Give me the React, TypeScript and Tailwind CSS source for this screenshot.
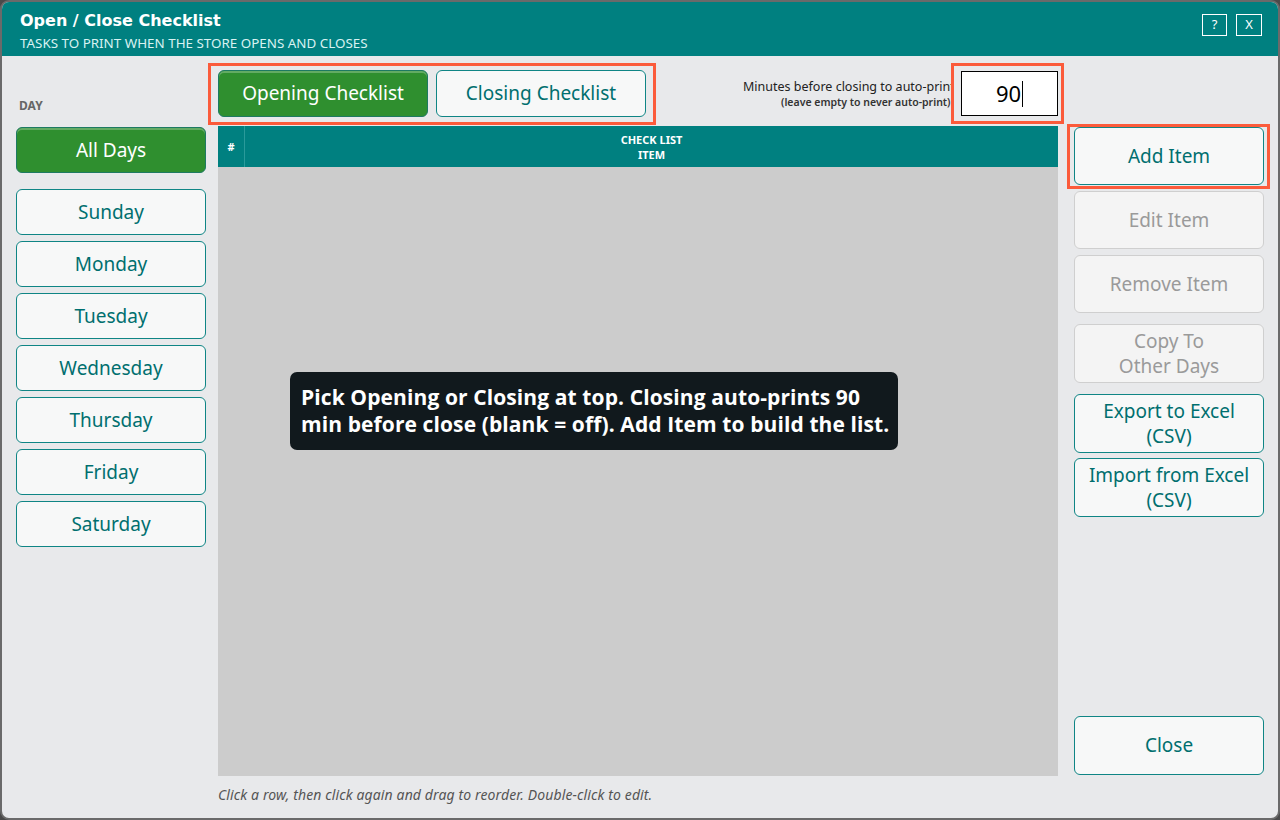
import React from "react";

const font = { fontFamily: '"Noto Sans", "Open Sans", sans-serif' };

function Btn({
  children,
  variant = "normal",
  className = "",
}: {
  children: React.ReactNode;
  variant?: "normal" | "active" | "disabled";
  className?: string;
}) {
  const styles =
    variant === "active"
      ? "bg-[#2f8f2f] border-[#1e7a62] text-white shadow-[inset_0_2px_0_rgba(255,255,255,0.25)]"
      : variant === "disabled"
      ? "bg-[#f4f4f4] border-[#cfcfcf] text-[#9a9a9a]"
      : "bg-[#f7f8f8] border-[#0f8585] text-[#006f6f]";
  return (
    <div
      className={`flex items-center justify-center text-center rounded-[6px] border-[1.5px] text-[19px] leading-[25px] ${styles} ${className}`}
    >
      {children}
    </div>
  );
}

export default function App() {
  const days = ["Sunday", "Monday", "Tuesday", "Wednesday", "Thursday", "Friday", "Saturday"];
  return (
    <div className="w-[1280px] h-[820px] bg-[#4a4a4a]" style={font}>
      <div className="w-[1280px] h-[820px] rounded-[9px] border-2 border-[#6a6a6a] overflow-hidden flex flex-col bg-[#e8e9eb]">
        {/* Header */}
        <div className="h-[54px] shrink-0 bg-[#008080] flex items-start justify-between pl-[18px] pr-[16px]">
          <div className="pt-[8px]">
            <div
              className="text-white text-[16px] font-bold leading-[21px]"
              style={{ fontFamily: '"DejaVu Sans", sans-serif' }}
            >
              Open / Close Checklist
            </div>
            <div className="text-[#d9f2f2] text-[13.4px] leading-[18px] mt-[3px]">
              TASKS TO PRINT WHEN THE STORE OPENS AND CLOSES
            </div>
          </div>
          <div className="flex gap-[9px] pt-[12px]">
            <div className="w-[25px] h-[22px] border border-white text-white text-[13px] flex items-center justify-center">
              ?
            </div>
            <div className="w-[26px] h-[22px] border border-white text-white text-[13px] flex items-center justify-center">
              X
            </div>
          </div>
        </div>

        {/* Body */}
        <div className="flex-1 flex pl-[14px] pr-[14px]">
          {/* Left column */}
          <div className="w-[190px] shrink-0 flex flex-col pt-[41px]">
            <div className="text-[12px] font-bold text-[#666] leading-[17px] pl-[3px]">DAY</div>
            <Btn variant="active" className="h-[46px] mt-[13px]">
              All Days
            </Btn>
            <div className="flex flex-col gap-[6px] mt-[16px]">
              {days.map((d) => (
                <Btn key={d} className="h-[46px]">
                  {d}
                </Btn>
              ))}
            </div>
          </div>

          {/* Center column */}
          <div className="w-[840px] shrink-0 ml-[12px] flex flex-col">
            <div className="h-[47px] mt-[14px] flex items-center">
              <div className="relative flex gap-[8px]">
                <Btn variant="active" className="w-[210px] h-[47px]">
                  Opening Checklist
                </Btn>
                <Btn className="w-[210px] h-[47px]">Closing Checklist</Btn>
                <span className="absolute -left-[10px] -right-[10px] -top-[7px] -bottom-[8px] border-[3px] border-[#fb5b3b] pointer-events-none" />
              </div>
              <div className="flex-1" />
              <div className="w-[209px] overflow-hidden text-[#222] whitespace-nowrap mr-[9px]">
                <div className="text-[12.5px] leading-[17px]">Minutes before closing to auto-print</div>
                <div className="text-[10.5px] leading-[15px] pl-[38px] font-semibold text-[#333]">
                  (leave empty to never auto-print)
                </div>
              </div>
              <div className="relative">
                <div className="w-[97px] h-[45px] bg-white border border-black flex items-center justify-center text-[22px] text-black">
                  <span>90</span>
                  <span className="inline-block w-px h-[26px] bg-black ml-[1px]" />
                </div>
                <span className="absolute -left-[10px] -right-[6px] -top-[8px] -bottom-[8px] border-[3px] border-[#fb5b3b] pointer-events-none" />
              </div>
            </div>

            {/* Table */}
            <div className="mt-[9px] flex flex-col h-[650px]">
              <div className="h-[41px] bg-[#008080] flex text-white text-[11px] font-bold leading-[15px]">
                <div className="w-[27px] border-r border-[#2a9a9a] flex items-center justify-center">#</div>
                <div className="flex-1 flex flex-col items-center justify-center">
                  <div>CHECK LIST</div>
                  <div>ITEM</div>
                </div>
              </div>
              <div className="flex-1 bg-[#cccccc] flex items-start justify-center">
                <div
                  className="mt-[205px] ml-[-88px] w-[608px] h-[78px] rounded-[7px] bg-[#11191d] text-white font-bold text-[21px] tracking-[0.1px] leading-[27px] pl-[11px] pr-[4px] pt-[12px] whitespace-nowrap"
                  style={{ fontFamily: '"Open Sans", "Noto Sans", sans-serif' }}
                >
                  Pick Opening or Closing at top. Closing auto-prints 90
                  <br />
                  min before close (blank = off). Add Item to build the list.
                </div>
              </div>
            </div>
            <div className="text-[14px] italic text-[#555] mt-[11px] leading-[16px] tracking-[0.12px]">
              Click a row, then click again and drag to reorder. Double-click to edit.
            </div>
          </div>

          {/* Right column */}
          <div className="w-[190px] shrink-0 ml-[16px] flex flex-col pt-[71px] pb-[43px]">
            <div className="relative">
              <Btn className="h-[58px]">Add Item</Btn>
              <span className="absolute -left-[7px] -right-[6px] -top-[3px] -bottom-[4px] border-[3px] border-[#fb5b3b] pointer-events-none" />
            </div>
            <Btn variant="disabled" className="h-[58px] mt-[6px]">
              Edit Item
            </Btn>
            <Btn variant="disabled" className="h-[58px] mt-[6px]">
              Remove Item
            </Btn>
            <Btn variant="disabled" className="h-[59px] mt-[11px]">
              Copy To
              <br />
              Other Days
            </Btn>
            <Btn className="h-[59px] mt-[11px]">
              Export to Excel
              <br />
              (CSV)
            </Btn>
            <Btn className="h-[59px] mt-[5px]">
              Import from Excel
              <br />
              (CSV)
            </Btn>
            <div className="flex-1" />
            <Btn className="h-[59px]">Close</Btn>
          </div>
        </div>
      </div>
    </div>
  );
}
